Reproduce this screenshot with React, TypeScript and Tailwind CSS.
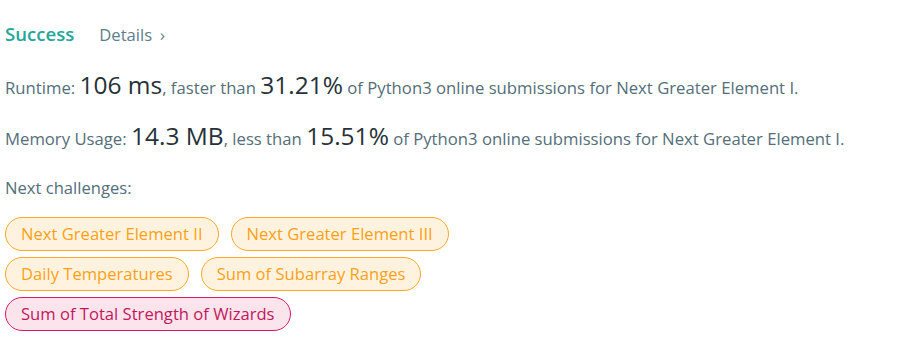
const challenges = [
  { title: "Next Greater Element II", hard: false },
  { title: "Next Greater Element III", hard: false },
  { title: "Daily Temperatures", hard: false },
  { title: "Sum of Subarray Ranges", hard: false },
  { title: "Sum of Total Strength of Wizards", hard: true },
];

const Tag = ({ title, hard }: { title: string; hard: boolean }) => (
  <a
    href="#"
    className={
      hard
        ? "inline-flex h-[34px] items-center rounded-full border border-[#d81b60] bg-[#fce4ec] px-[15px] text-[16.6px] text-[#c2185b]"
        : "inline-flex h-[34px] items-center rounded-full border border-[#ffa726] bg-[#fff3e0] px-[15px] text-[16.6px] text-[#ffa116]"
    }
  >
    {title}
  </a>
);

export default function App() {
  return (
    <div
      className="bg-white px-[5px] pt-[20px] text-[#546e7a]"
      style={{ fontFamily: "'Open Sans', 'Noto Sans', sans-serif" }}
    >
      <div className="flex items-baseline leading-[27px]">
        <span className="text-[18.6px] font-semibold text-[#26a69a]">Success</span>
        <a href="#" className="ml-[25px] flex items-baseline text-[16.6px] text-[#607d8b]">
          Details <span className="ml-[8px]">›</span>
        </a>
      </div>

      <p className="mt-[22px] text-[16.7px] leading-[30px]">
        Runtime: <span className="text-[24.5px] text-[#263238]">106 ms</span>, faster than{" "}
        <span className="text-[24.5px] text-[#263238]">31.21%</span> of Python3 online submissions for Next
        Greater Element I.
      </p>

      <p className="mt-[18px] text-[16.7px] leading-[30px]">
        Memory Usage: <span className="text-[24.5px] text-[#263238]">14.3 MB</span>, less than{" "}
        <span className="text-[24.5px] text-[#263238]">15.51%</span> of Python3 online submissions for Next
        Greater Element I.
      </p>

      <p className="mt-[19px] text-[16.6px] leading-[30px]">Next challenges:</p>

      <div className="mt-[14px] flex max-w-[470px] flex-wrap gap-x-[12px] gap-y-[6px]">
        {challenges.map((c) => (
          <Tag key={c.title} title={c.title} hard={c.hard} />
        ))}
      </div>
    </div>
  );
}
